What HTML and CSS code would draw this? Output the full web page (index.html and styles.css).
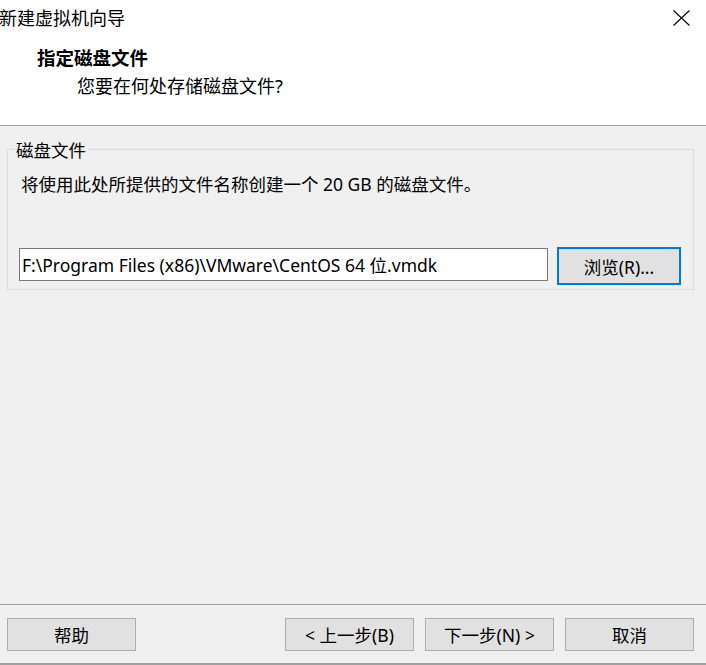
FILE: index.html
```html
<!DOCTYPE html>
<html lang="zh-CN">
<head>
<meta charset="utf-8">
<title>新建虚拟机向导</title>
<link rel="stylesheet" href="styles.css">
</head>
<body>
<div class="window">
  <div class="header">
    <div class="titlebar">
      <span class="title">新建虚拟机向导</span>
      <svg class="close" width="17" height="16" viewBox="0 0 17 16" aria-label="关闭">
        <path d="M0.5 0.5 L16.5 15.5 M16.5 0.5 L0.5 15.5" stroke="#000" stroke-width="1.1" fill="none"/>
      </svg>
    </div>
    <div class="heading">指定磁盘文件</div>
    <div class="subheading">您要在何处存储磁盘文件?</div>
  </div>
  <div class="content">
    <fieldset class="group">
      <legend class="legend">磁盘文件</legend>
      <p class="desc">将使用此处所提供的文件名称创建一个 20 GB 的磁盘文件。</p>
      <div class="filerow">
        <input class="path" type="text" value="F:\Program Files (x86)\VMware\CentOS 64 位.vmdk">
        <button class="btn browse" type="button">浏览(R)...</button>
      </div>
    </fieldset>
  </div>
  <div class="footer">
    <button class="btn" type="button">帮助</button>
    <div class="navbtns">
      <button class="btn" type="button">&lt; 上一步(B)</button>
      <button class="btn" type="button">下一步(N) &gt;</button>
      <button class="btn" type="button">取消</button>
    </div>
  </div>
</div>
</body>
</html>
```
FILE: styles.css
```css
* { box-sizing: border-box; }
html, body { margin: 0; padding: 0; }
body {
  font-family: "Noto Sans", "Noto Sans CJK SC", sans-serif;
  font-size: 17.5px;
  color: #000;
  background: #f0f0f0;
}
.window {
  width: 706px;
  height: 665px;
  display: flex;
  flex-direction: column;
  background: #f0f0f0;
  overflow: hidden;
}
.header {
  height: 126px;
  background: #fff;
  border-bottom: 1px solid #a0a0a0;
  flex: none;
}
.titlebar {
  height: 36px;
  display: flex;
  justify-content: space-between;
  align-items: flex-start;
  padding-top: 6px;
}
.title {
  line-height: 24px;
  font-size: 18px;
  margin-left: -1px;
}
.close {
  margin-top: 4px;
  margin-right: 16px;
}
.heading {
  margin-top: 10px;
  margin-left: 37px;
  line-height: 24px;
  font-weight: bold;
  font-size: 18.5px;
}
.subheading {
  margin-top: 4px;
  margin-left: 77px;
  line-height: 24px;
  font-size: 18px;
}
.content {
  flex: 1;
  padding: 13px 12px 0 7px;
}
.group {
  margin: 0;
  border: 1px solid #dcdcdc;
  padding: 0 12px 4px 11px;
  min-width: 0;
}
.legend {
  margin-left: -4px;
  padding: 0 2px 0 1px;
  line-height: 20px;
  font-size: 17.5px;
  color: #000;
  transform: translateY(1px);
}
.desc {
  margin: 13px 0 0 2px;
  line-height: 24px;
}
.filerow {
  display: flex;
  align-items: flex-start;
  gap: 9px;
  margin-top: 51px;
}
.path {
  width: 529px;
  height: 33px;
  margin-top: 1px;
  border: 1px solid #7a7a7a;
  background: #fff;
  font-family: inherit;
  font-size: 17.5px;
  padding: 0 2px;
  color: #000;
  outline: none;
}
.btn {
  width: 129px;
  height: 33px;
  border: 1px solid #adadad;
  background: #e1e1e1;
  font-family: inherit;
  font-size: 17.5px;
  color: #000;
  padding: 0;
}
.browse {
  width: 124px;
  height: 38px;
  border: 2px solid #0078d7;
}
.footer {
  flex: none;
  height: 61px;
  border-top: 1px solid #a0a0a0;
  border-bottom: 2px solid #a0a0a0;
  display: flex;
  justify-content: space-between;
  align-items: flex-start;
  padding: 13px 12px 0 7px;
}
.navbtns {
  display: flex;
  gap: 11px;
}
```
